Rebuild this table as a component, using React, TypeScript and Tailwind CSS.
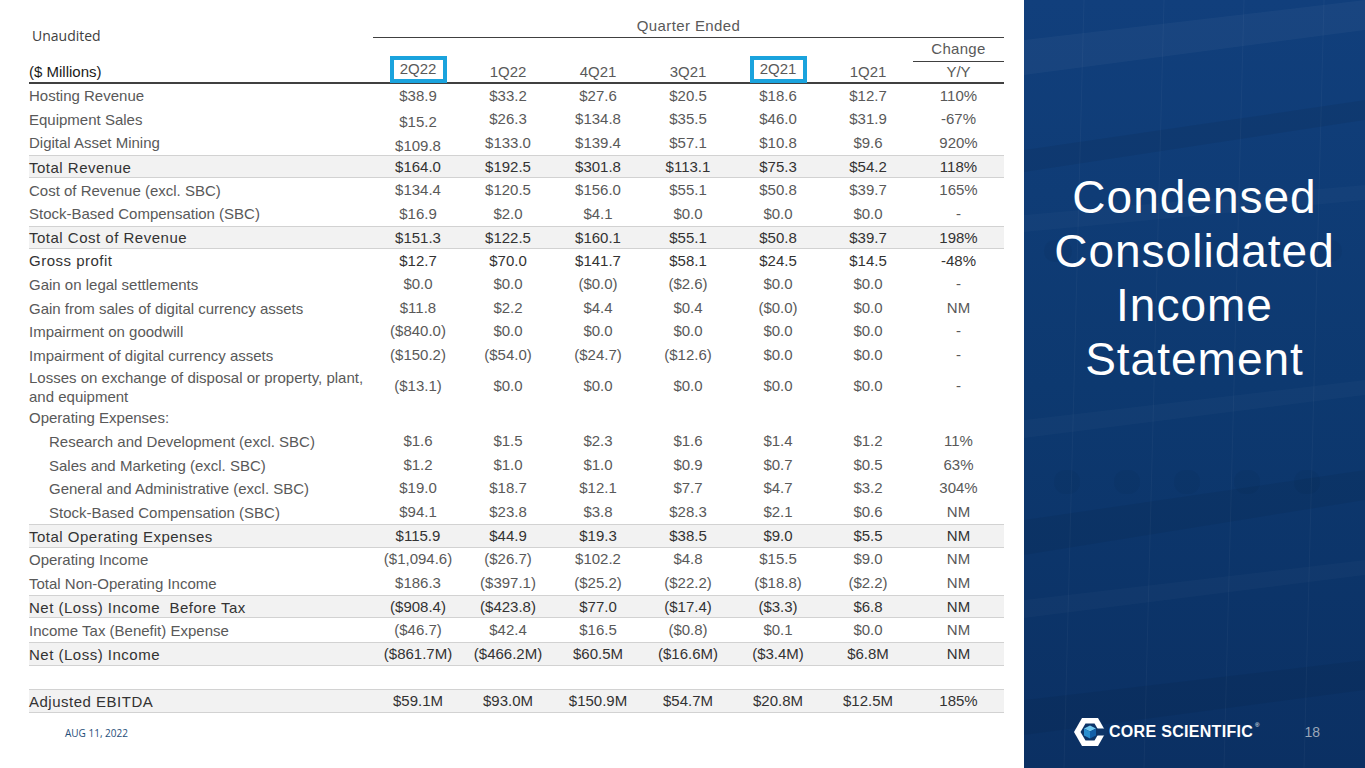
import React from "react";

type Row = {
  label: string;
  values?: string[];
  kind?: "total" | "emph" | "blank" | "tall";
  indent?: boolean;
  lowFirst?: boolean;
};

const rows: Row[] = [
  { label: "Hosting Revenue", values: ["$38.9", "$33.2", "$27.6", "$20.5", "$18.6", "$12.7", "110%"] },
  { label: "Equipment Sales", values: ["$15.2", "$26.3", "$134.8", "$35.5", "$46.0", "$31.9", "-67%"], lowFirst: true },
  { label: "Digital Asset Mining", values: ["$109.8", "$133.0", "$139.4", "$57.1", "$10.8", "$9.6", "920%"], lowFirst: true },
  { label: "Total Revenue", values: ["$164.0", "$192.5", "$301.8", "$113.1", "$75.3", "$54.2", "118%"], kind: "total" },
  { label: "Cost of Revenue (excl. SBC)", values: ["$134.4", "$120.5", "$156.0", "$55.1", "$50.8", "$39.7", "165%"] },
  { label: "Stock-Based Compensation (SBC)", values: ["$16.9", "$2.0", "$4.1", "$0.0", "$0.0", "$0.0", "-"] },
  { label: "Total Cost of Revenue", values: ["$151.3", "$122.5", "$160.1", "$55.1", "$50.8", "$39.7", "198%"], kind: "total" },
  { label: "Gross profit", values: ["$12.7", "$70.0", "$141.7", "$58.1", "$24.5", "$14.5", "-48%"], kind: "emph" },
  { label: "Gain on legal settlements", values: ["$0.0", "$0.0", "($0.0)", "($2.6)", "$0.0", "$0.0", "-"] },
  { label: "Gain from sales of digital currency assets", values: ["$11.8", "$2.2", "$4.4", "$0.4", "($0.0)", "$0.0", "NM"] },
  { label: "Impairment on goodwill", values: ["($840.0)", "$0.0", "$0.0", "$0.0", "$0.0", "$0.0", "-"] },
  { label: "Impairment of digital currency assets", values: ["($150.2)", "($54.0)", "($24.7)", "($12.6)", "$0.0", "$0.0", "-"] },
  { label: "Losses on exchange of disposal or property, plant,\nand equipment", values: ["($13.1)", "$0.0", "$0.0", "$0.0", "$0.0", "$0.0", "-"], kind: "tall" },
  { label: "Operating Expenses:" },
  { label: "Research and Development (excl. SBC)", values: ["$1.6", "$1.5", "$2.3", "$1.6", "$1.4", "$1.2", "11%"], indent: true },
  { label: "Sales and Marketing (excl. SBC)", values: ["$1.2", "$1.0", "$1.0", "$0.9", "$0.7", "$0.5", "63%"], indent: true },
  { label: "General and Administrative (excl. SBC)", values: ["$19.0", "$18.7", "$12.1", "$7.7", "$4.7", "$3.2", "304%"], indent: true },
  { label: "Stock-Based Compensation (SBC)", values: ["$94.1", "$23.8", "$3.8", "$28.3", "$2.1", "$0.6", "NM"], indent: true },
  { label: "Total Operating Expenses", values: ["$115.9", "$44.9", "$19.3", "$38.5", "$9.0", "$5.5", "NM"], kind: "total" },
  { label: "Operating Income", values: ["($1,094.6)", "($26.7)", "$102.2", "$4.8", "$15.5", "$9.0", "NM"] },
  { label: "Total Non-Operating Income", values: ["$186.3", "($397.1)", "($25.2)", "($22.2)", "($18.8)", "($2.2)", "NM"] },
  { label: "Net (Loss) Income  Before Tax", values: ["($908.4)", "($423.8)", "$77.0", "($17.4)", "($3.3)", "$6.8", "NM"], kind: "total" },
  { label: "Income Tax (Benefit) Expense", values: ["($46.7)", "$42.4", "$16.5", "($0.8)", "$0.1", "$0.0", "NM"] },
  { label: "Net (Loss) Income", values: ["($861.7M)", "($466.2M)", "$60.5M", "($16.6M)", "($3.4M)", "$6.8M", "NM"], kind: "total" },
  { label: "", kind: "blank" },
  { label: "Adjusted EBITDA", values: ["$59.1M", "$93.0M", "$150.9M", "$54.7M", "$20.8M", "$12.5M", "185%"], kind: "total" },
];

const quarters = ["2Q22", "1Q22", "4Q21", "3Q21", "2Q21", "1Q21"];
const cols = "grid w-[975px] grid-cols-[344px_repeat(6,90px)_91px]";

function TableRow({ row }: { row: Row }) {
  const dark = row.kind === "total" || row.kind === "emph";
  const height = row.kind === "tall" ? "h-[39px]" : row.kind === "blank" ? "h-[23.4px]" : "h-[23.6px]";
  const box = row.kind === "total" ? "bg-[#f2f2f2] border-y border-[#d2d2d2]" : "";
  return (
    <div className={`${cols} ${height} ${box} items-center`}>
      <div
        className={`whitespace-pre leading-[19px] ${row.indent ? "pl-[20px]" : ""} ${
          dark ? "text-[#333333] tracking-[0.5px]" : "text-[#595959]"
        }`}
      >
        {row.label}
      </div>
      {row.values?.map((v, i) => (
        <div
          key={i}
          className={`text-center ${dark ? "text-[#333333]" : "text-[#595959]"} ${
            row.lowFirst && i === 0 ? "translate-y-[3px]" : ""
          }`}
        >
          {v}
        </div>
      ))}
    </div>
  );
}

function LogoMark() {
  return (
    <svg width="34" height="32" viewBox="0 0 34 32">
      <polygon points="1,16 9,2 25,2 33,16 25,30 9,30" fill="#ffffff" />
      <polygon points="7.5,16 12.5,7.5 21.5,7.5 26.5,16 21.5,24.5 12.5,24.5" fill="#0c3468" />
      <rect x="24" y="12.5" width="10" height="7" fill="#0c3468" />
      <polygon points="17,9.5 23,12.5 17,15.5 11,12.5" fill="#6fc7ef" />
      <polygon points="11,12.5 17,15.5 17,22.5 11,19.5" fill="#2a8fd0" />
      <polygon points="23,12.5 17,15.5 17,22.5 23,19.5" fill="#125fa8" />
    </svg>
  );
}

function PanelTexture() {
  return (
    <svg className="absolute inset-0 h-full w-full" viewBox="0 0 341 768" preserveAspectRatio="none">
      <polygon points="0,40 341,0 341,30 0,75" fill="#ffffff" opacity="0.035" />
      <polygon points="0,150 341,100 341,120 0,172" fill="#000000" opacity="0.06" />
      <polygon points="0,215 341,185 341,200 0,232" fill="#ffffff" opacity="0.025" />
      <polygon points="0,420 341,380 341,395 0,438" fill="#ffffff" opacity="0.025" />
      <polygon points="0,520 341,470 341,500 0,555" fill="#000000" opacity="0.05" />
      <polygon points="0,600 341,560 341,575 0,618" fill="#ffffff" opacity="0.025" />
      <polygon points="0,700 341,660 341,690 0,735" fill="#000000" opacity="0.05" />
      {[20, 70, 125, 180, 235, 290].map((x) => (
        <rect key={x} x={x} y="240" width="28" height="22" rx="10" fill="#000000" opacity="0.035" />
      ))}
      {[30, 90, 150, 210, 270].map((x) => (
        <rect key={x} x={x} y="470" width="26" height="24" rx="11" fill="#000000" opacity="0.03" />
      ))}
      {[60, 140, 220, 300].map((x) => (
        <line key={x} x1={x} y1="0" x2={x - 20} y2="768" stroke="#ffffff" strokeWidth="1" opacity="0.03" />
      ))}
    </svg>
  );
}

export default function App() {
  return (
    <div className="flex h-[768px] w-[1365px] overflow-hidden bg-white font-['Liberation_Sans',Arial,sans-serif] text-[15px]">
      {/* Table side */}
      <div className="flex w-[1024px] flex-col pl-[29px]">
        {/* Header */}
        <div className={`${cols} h-[38px] grid-rows-[38px]`}>
          <div className="pt-[26px] pl-[3px] font-['Open_Sans',sans-serif] text-[14px] leading-[20px] text-[#404040]">
            Unaudited
          </div>
          <div className="col-span-7 flex items-end justify-center border-b-[1.5px] border-[#404040] tracking-[0.4px] text-[#595959]">
            Quarter Ended
          </div>
        </div>
        <div className={`${cols} h-[24px] grid-rows-[24px]`}>
          <div className="col-span-7" />
          <div className="flex items-end justify-center border-b-[1.5px] border-[#404040] pb-[1px] tracking-[0.3px] text-[#595959]">
            Change
          </div>
        </div>
        <div className={`${cols} h-[22px] grid-rows-[20px] border-b-2 border-[#404040]`}>
          <div className="flex items-end leading-[20px] text-[#1a1a1a]">($ Millions)</div>
          {quarters.map((q, i) => (
            <div key={q} className="flex h-[20px] items-end justify-center">
              {i === 0 || i === 4 ? (
                <div className="-mb-[1px] flex h-[27px] w-[57px] shrink-0 items-center justify-center border-[4px] border-[#1aa3dd] text-[#595959]">
                  {q}
                </div>
              ) : (
                <span className="leading-[20px] text-[#595959]">{q}</span>
              )}
            </div>
          ))}
          <div className="flex items-end justify-center leading-[20px] text-[#595959]">Y/Y</div>
        </div>

        {/* Body */}
        <div className="w-[975px]">
          {rows.map((r, i) => (
            <TableRow key={i} row={r} />
          ))}
        </div>

        <div className="mt-[14px] pl-[36px] font-['Open_Sans',sans-serif] text-[10px] leading-[12px] text-[#1f4e79]">
          AUG 11, 2022
        </div>
      </div>

      {/* Title panel */}
      <div className="relative flex flex-1 flex-col bg-gradient-to-b from-[#113f7c] via-[#0d3970] to-[#0b3063]">
        <PanelTexture />
        <div className="relative mt-[170px] text-center text-[46px] leading-[54px] tracking-[1px] text-white">
          Condensed
          <br />
          Consolidated
          <br />
          Income
          <br />
          Statement
        </div>
        <div className="relative mt-auto mb-[20px] flex items-center justify-between pl-[49px] pr-[45px]">
          <div className="flex items-center gap-[2px]">
            <LogoMark />
            <span className="text-[16px] font-bold tracking-[0.3px] text-white">CORE SCIENTIFIC</span>
            <span className="-mt-[14px] text-[6px] text-white">®</span>
          </div>
          <span className="text-[14px] text-[#9aa6b8]">18</span>
        </div>
      </div>
    </div>
  );
}
